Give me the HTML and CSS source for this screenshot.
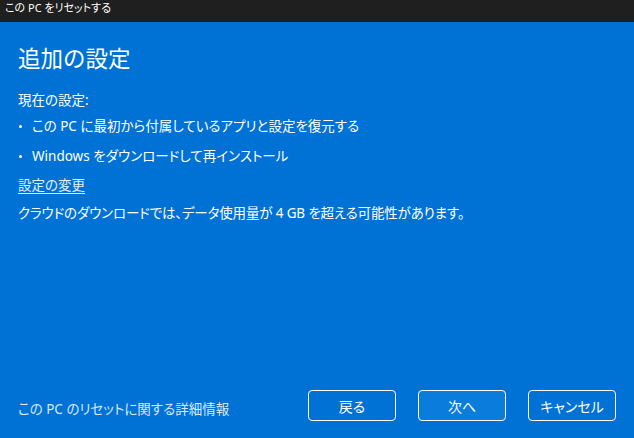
FILE: index.html
```html
<!DOCTYPE html>
<html lang="ja">
<head>
<meta charset="utf-8">
<title>この PC をリセットする</title>
<link rel="stylesheet" href="styles.css">
</head>
<body>
<div class="window">
  <div class="titlebar">この PC をリセットする</div>
  <div class="content">
    <main class="main">
      <h1 class="heading">追加の設定</h1>
      <p class="label">現在の設定:</p>
      <ul class="list">
        <li class="item">この PC に最初から付属しているアプリと設定を復元する</li>
        <li class="item">Windows をダウンロードして再インストール</li>
      </ul>
      <a class="change" href="#">設定の変更</a>
      <p class="note">クラウドのダウンロードでは、データ使用量が 4 GB を超える可能性があります。</p>
    </main>
    <footer class="footer">
      <a class="info" href="#">この PC のリセットに関する詳細情報</a>
      <div class="buttons">
        <button class="btn">戻る</button>
        <button class="btn btn-primary">次へ</button>
        <button class="btn">キャンセル</button>
      </div>
    </footer>
  </div>
</div>
</body>
</html>
```

FILE: styles.css
```css
* { box-sizing: border-box; }
html, body {
  margin: 0;
  padding: 0;
  width: 634px;
  height: 438px;
  overflow: hidden;
}
body {
  font-family: "Noto Sans", "Noto Sans CJK JP", sans-serif;
  font-feature-settings: "palt";
  color: #ffffff;
  background: #0072d6;
}
.window {
  display: flex;
  flex-direction: column;
  height: 438px;
}
.titlebar {
  height: 22px;
  background: #1f1f1f;
  color: #ffffff;
  font-size: 11px;
  line-height: 16px;
  padding: 0 0 0 5px;
}
.content {
  flex: 1;
  display: flex;
  flex-direction: column;
  justify-content: space-between;
  padding: 0 18px 17px 18px;
}
.main {
  display: flex;
  flex-direction: column;
  align-items: flex-start;
}
.heading {
  margin: 22px 0 0 0;
  font-size: 22.5px;
  font-weight: 400;
  line-height: 30px;
  font-feature-settings: normal;
}
.label {
  margin: 16px 0 0 0;
  font-size: 13.5px;
  line-height: 20px;
}
.list {
  list-style: none;
  margin: 6px 0 0 0;
  padding: 0;
  display: flex;
  flex-direction: column;
  gap: 10px;
}
.item {
  position: relative;
  padding-left: 14px;
  font-size: 13.5px;
  line-height: 20px;
}
.item::before {
  content: "";
  position: absolute;
  left: 1px;
  top: 9px;
  width: 3px;
  height: 3px;
  border-radius: 50%;
  background: #ffffff;
}
.change {
  margin-top: 9px;
  color: #e6f0fb;
  font-size: 13.5px;
  line-height: 20px;
  text-decoration: underline;
  text-underline-offset: 3px;
}
.note {
  margin: 8px 0 0 0;
  font-size: 13.5px;
  line-height: 20px;
  letter-spacing: -0.15px;
}
.footer {
  display: flex;
  align-items: center;
  justify-content: space-between;
}
.info {
  color: #d8e8f8;
  font-size: 13.5px;
  line-height: 20px;
  text-decoration: none;
  padding-top: 6px;
}
.buttons {
  display: flex;
  gap: 22px;
}
.btn {
  width: 88px;
  height: 31px;
  border: 1.5px solid #ffffff;
  border-radius: 4px;
  background: #0072d6;
  color: #ffffff;
  font-family: "Noto Sans", "Noto Sans CJK JP", sans-serif;
  font-feature-settings: "palt";
  font-size: 14px;
  padding: 0;
}
.btn-primary {
  background: #0a7cdc;
}
```
